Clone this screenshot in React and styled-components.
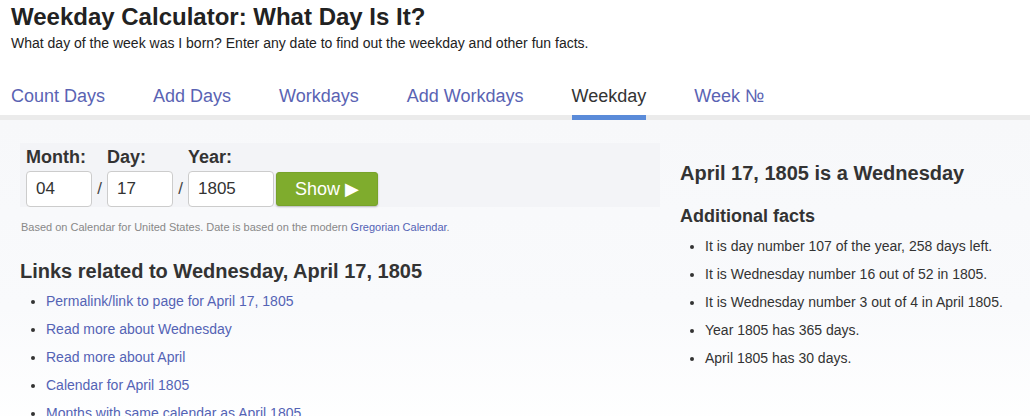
import React from 'react';
import styled, { createGlobalStyle } from 'styled-components';

const Global = createGlobalStyle`
  body {
    margin: 0;
    background: #fff;
    font-family: "Liberation Sans", Arial, sans-serif;
    color: #333;
  }
`;

const Header = styled.header`
  padding: 0 11px;
`;

const Title = styled.h1`
  margin: 0;
  padding-top: 2px;
  font-size: 24px;
  line-height: 29px;
  font-weight: bold;
  color: #222;
`;

const Subtitle = styled.p`
  margin: 3px 0 0;
  font-size: 14px;
  line-height: 18px;
  color: #222;
`;

const Tabs = styled.nav`
  display: flex;
  gap: 48px;
  margin-top: 33px;
  padding: 0 11px;
  border-bottom: 5px solid #ebebeb;
`;

const Tab = styled.a`
  font-size: 18px;
  line-height: 22px;
  padding-bottom: 8px;
  margin-bottom: -5px;
  color: ${(p) => (p.$active ? '#333' : '#5a63b3')};
  border-bottom: 5px solid ${(p) => (p.$active ? '#5a8bd9' : 'transparent')};
  text-decoration: none;
`;

const Main = styled.main`
  display: flex;
  background: linear-gradient(#f7f8fa 0%, #f9fafc 60%, #ffffff 100%);
  min-height: 296px;
`;

const Left = styled.section`
  width: 640px;
  padding: 23px 0 0 20px;
`;

const Right = styled.section`
  flex: 1;
  padding: 41px 0 0 20px;
`;

const FormBox = styled.div`
  background: #f3f4f7;
  padding: 4px 0 0 6px;
`;

const Fields = styled.div`
  display: flex;
  align-items: flex-end;
`;

const Field = styled.label`
  display: flex;
  flex-direction: column;
`;

const Label = styled.span`
  font-size: 18px;
  font-weight: bold;
  line-height: 20px;
  color: #333;
  margin-bottom: 4px;
`;

const Input = styled.input`
  box-sizing: border-box;
  width: ${(p) => p.$w}px;
  height: 36px;
  border: 1px solid #ccc;
  border-radius: 4px;
  background: #fff;
  font-family: "Liberation Sans", Arial, sans-serif;
  font-size: 17px;
  color: #333;
  padding: 0 9px;
  outline: none;
`;

const Slash = styled.span`
  width: 15px;
  text-align: center;
  font-size: 17px;
  color: #444;
  line-height: 36px;
`;

const ShowButton = styled.button`
  box-sizing: border-box;
  width: 102px;
  height: 34px;
  margin: 0 0 1px 2px;
  border: 1px solid #77a32a;
  border-radius: 3px;
  background: #7fac2d;
  color: #fff;
  font-family: "Liberation Sans", Arial, sans-serif;
  font-size: 18px;
  box-shadow: 0 1px 2px rgba(0, 0, 0, 0.25);
  cursor: pointer;
`;

const Note = styled.p`
  margin: 13px 0 0 1px;
  font-size: 11px;
  line-height: 14px;
  color: #888;
`;

const Link = styled.a`
  color: #5463b5;
  text-decoration: none;
`;

const H2 = styled.h2`
  margin: ${(p) => p.$m || '0'};
  font-size: 20px;
  line-height: 24px;
  font-weight: bold;
  color: #333;
`;

const H3 = styled.h3`
  margin: 20px 0 0;
  font-size: 18px;
  line-height: 22px;
  font-weight: bold;
  color: #333;
`;

const List = styled.ul`
  margin: ${(p) => p.$m || '0'};
  padding-left: ${(p) => p.$pl}px;
  list-style: disc;
  font-size: 14px;
  color: #333;

  li {
    line-height: 18px;
    margin-bottom: 10px;
  }
  li::marker {
    color: #333;
  }
`;

const links = [
  'Permalink/link to page for April 17, 1805',
  'Read more about Wednesday',
  'Read more about April',
  'Calendar for April 1805',
  'Months with same calendar as April 1805',
];

const facts = [
  'It is day number 107 of the year, 258 days left.',
  'It is Wednesday number 16 out of 52 in 1805.',
  'It is Wednesday number 3 out of 4 in April 1805.',
  'Year 1805 has 365 days.',
  'April 1805 has 30 days.',
];

const tabs = ['Count Days', 'Add Days', 'Workdays', 'Add Workdays', 'Weekday', 'Week №'];

export default function App() {
  return (
    <>
      <Global />
      <Header>
        <Title>Weekday Calculator: What Day Is It?</Title>
        <Subtitle>
          What day of the week was I born? Enter any date to find out the weekday and other fun facts.
        </Subtitle>
      </Header>
      <Tabs>
        {tabs.map((t) => (
          <Tab key={t} $active={t === 'Weekday'}>
            {t}
          </Tab>
        ))}
      </Tabs>
      <Main>
        <Left>
          <FormBox>
            <Fields>
              <Field>
                <Label>Month:</Label>
                <Input $w={66} defaultValue="04" />
              </Field>
              <Slash>/</Slash>
              <Field>
                <Label>Day:</Label>
                <Input $w={66} defaultValue="17" />
              </Field>
              <Slash>/</Slash>
              <Field>
                <Label>Year:</Label>
                <Input $w={86} defaultValue="1805" />
              </Field>
              <ShowButton>Show ▶</ShowButton>
            </Fields>
          </FormBox>
          <Note>
            Based on Calendar for United States. Date is based on the modern{' '}
            <Link>Gregorian Calendar</Link>.
          </Note>
          <H2 $m="25px 0 0 0">Links related to Wednesday, April 17, 1805</H2>
          <List $pl={26} $m="9px 0 0 0">
            {links.map((l) => (
              <li key={l}>
                <Link>{l}</Link>
              </li>
            ))}
          </List>
        </Left>
        <Right>
          <H2>April 17, 1805 is a Wednesday</H2>
          <H3>Additional facts</H3>
          <List $pl={25} $m="10px 0 0 0">
            {facts.map((f) => (
              <li key={f}>{f}</li>
            ))}
          </List>
        </Right>
      </Main>
    </>
  );
}
